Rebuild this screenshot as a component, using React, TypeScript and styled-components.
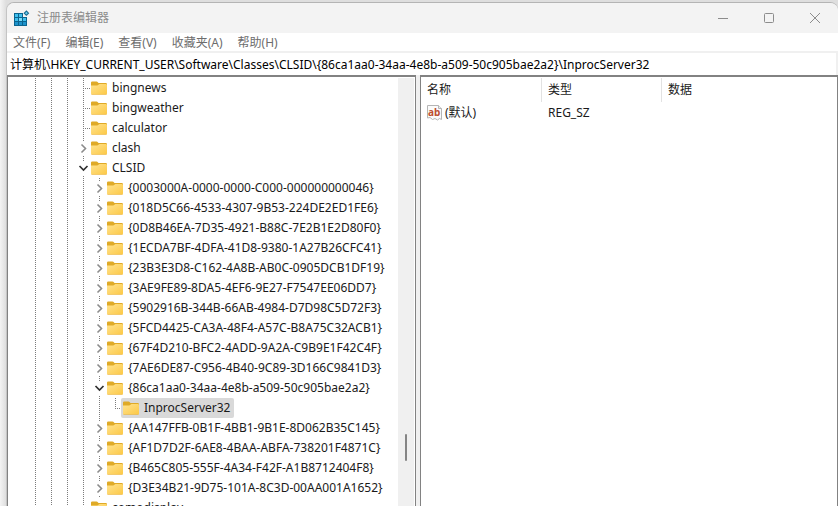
import React from 'react';
import styled, { createGlobalStyle, css } from 'styled-components';

const GlobalStyle = createGlobalStyle`
  *, *::before, *::after { box-sizing: border-box; }
  html, body, #root { height: 100%; }
  body {
    margin: 0;
    overflow: hidden;
    background: #ececec;
    color: #1a1a1a;
    font: 12px/20px "Noto Sans", "Noto Sans CJK SC", sans-serif;
  }
  button, input { font: inherit; color: inherit; }
`;

const Desktop = styled.div`
  height: 100%;
  padding: 2px 0 0 6px;
  background: linear-gradient(to right, #f4f4f4, #dedede 6px);
`;

const Window = styled.div`
  display: flex;
  flex-direction: column;
  height: 100%;
  border-top: 1px solid #b4b4b4;
  border-left: 1px solid #c4c4c4;
  border-radius: 8px 8px 0 0;
  background: #f0f0f0;
  overflow: hidden;
`;

const TitleBar = styled.header`
  display: flex;
  flex: none;
  align-items: center;
  height: 30px;
  padding-left: 6px;
  background: #f3f3f3;
  color: #8c8c8c;
`;

const Title = styled.h1`
  flex: 1;
  margin: 0 0 0 7px;
  font-size: 12px;
  font-weight: 400;
`;

const CaptionButton = styled.button`
  display: grid;
  place-items: center;
  width: 46px;
  height: 28px;
  padding: 0;
  border: 0;
  background: transparent;
`;

const MenuBar = styled.nav`
  display: flex;
  flex: none;
  height: 18px;
  padding-left: 6px;
  gap: 15px;
  background: #fff;
  color: #6d6d6d;
`;

const MenuButton = styled.button`
  padding: 0;
  border: 0;
  background: transparent;
  line-height: 20px;
`;

const AddressField = styled.input`
  flex: none;
  width: calc(100% - 2px);
  height: 22px;
  margin-top: 2px;
  padding: 0 3px;
  border: 0;
  outline: 0;
  background: #fff;
  color: #000;
`;

const Panes = styled.main`
  display: grid;
  flex: 1;
  grid-template-columns: 409px minmax(0, 1fr);
  gap: 4px;
  min-height: 0;
`;

const paneFrame = css`
  border: 1px solid #828282;
  border-top-width: 2px;
  border-bottom: 0;
  background: #fff;
  overflow: hidden;
`;

const TreePane = styled.section`
  ${paneFrame}
  display: flex;
  padding: 1px 1px 0 0;
`;

const Tree = styled.ul`
  flex: 1;
  min-width: 0;
  margin: 0;
  padding: 0 0 0 19px;
  list-style: none;
`;

const TreeRow = styled.li`
  display: flex;
  height: 20px;
  white-space: nowrap;
`;

const dots = css`
  background-image: repeating-linear-gradient(to bottom, #7c7c7c 0 1px, transparent 1px 2px);
  background-repeat: no-repeat;
  background-position: 8px 0;
`;

const Guide = styled.span`
  flex: none;
  width: 16px;
  ${dots}
  background-size: 1px 100%;
`;

const Branch = styled.span<{ $last?: boolean }>`
  flex: none;
  width: 16px;
  background-image:
    repeating-linear-gradient(to bottom, #7c7c7c 0 1px, transparent 1px 2px),
    repeating-linear-gradient(to right, #7c7c7c 0 1px, transparent 1px 2px);
  background-repeat: no-repeat;
  background-position: 8px 0, 8px 10px;
  background-size: 1px ${p => (p.$last ? '10px' : '100%')}, 8px 1px;
`;

const Expander = styled.button`
  display: grid;
  flex: none;
  place-items: center;
  width: 16px;
  padding: 0;
  border: 0;
  background-color: transparent;
  ${dots}
  background-size: 1px 100%;

  svg { background: #fff; }
`;

const KeyButton = styled.button<{ $selected?: boolean }>`
  display: flex;
  align-items: center;
  gap: 5px;
  height: 20px;
  margin-left: -2px;
  padding: 0 4px 0 2px;
  border: 0;
  border-radius: 2px;
  background: ${p => (p.$selected ? '#d9d9d9' : 'transparent')};
  line-height: 20px;
`;

const ScrollTrack = styled.div`
  display: flex;
  flex: none;
  flex-direction: column;
  align-items: center;
  width: 16px;
  background: #f0f0f0;
`;

const ScrollOffset = styled.div`
  flex: 356 0 0;
`;

const ScrollThumb = styled.div`
  flex: 27 0 0;
  width: 2px;
  border-radius: 1px;
  background: #858585;
`;

const ScrollRest = styled.div`
  flex: 45 0 0;
`;

const ValuePane = styled.section`
  ${paneFrame}
  padding-top: 1px;
`;

const ValueTable = styled.table`
  width: 100%;
  border-collapse: separate;
  border-spacing: 0;
  table-layout: fixed;
`;

const HeadCell = styled.th`
  height: 24px;
  padding: 0 0 0 6px;
  border-right: 1px solid #e2e2e2;
  font-weight: 400;
  text-align: left;

  &:last-child { border-right: 0; }
`;

const Cell = styled.td`
  height: 22px;
  padding: 0 0 0 6px;
`;

const ValueName = styled.span`
  display: flex;
  align-items: center;
  gap: 2px;
  margin-left: -1px;
`;

const AppIcon = () => (
  <svg width="17" height="16" viewBox="0 0 17 16" aria-hidden="true">
    <path d="M1 3h9v4h4v9H1z" fill="#0b648f" />
    <path d="M2 4h3v3H2zM6 4h3v3H6zM2 8h3v3H2zM10 8h3v3h-3z" fill="#3fc0ee" />
    <path d="M6 8h3v3H6z" fill="#7cdcf8" />
    <path d="M2 12h3v3H2zM6 12h3v3H6zM10 12h3v3h-3z" fill="#1c92cb" />
    <path d="m13.4.3 2.9 2.9-2.9 2.9-2.9-2.9z" fill="#17688f" />
    <path d="m13.4 1.8 1.4 1.4-1.4 1.4L12 3.2z" fill="#69cff0" />
  </svg>
);

const FolderIcon = () => (
  <svg width="16" height="14" viewBox="0 0 16 14" aria-hidden="true">
    <defs>
      <linearGradient id="folder-front" x1="0" y1="0" x2="1" y2="1">
        <stop offset="0" stopColor="#ffe38f" />
        <stop offset="1" stopColor="#fcc845" />
      </linearGradient>
    </defs>
    <path d="M0 1.6Q0 .4 1.2.4h4.2q.5 0 .9.4l1.2 1.2h7.3Q16 2 16 3.2V8H0z" fill="#dfaa27" />
    <path d="M0 4.4h6.2q.5 0 .9-.4l.6-.6q.3-.3.8-.3h6.3q1.2 0 1.2 1.2v8.1q0 1.2-1.2 1.2H1.2Q0 13.6 0 12.4z" fill="url(#folder-front)" />
    <path d="M.3 13q.3.6.9.6h13.6q.6 0 .9-.6z" fill="#e7ad32" />
  </svg>
);

const Chevron = ({ open }: { open?: boolean }) => (
  <svg width="12" height="14" viewBox="0 0 12 14" aria-hidden="true">
    {open ? (
      <path d="m2.5 5 4 4 4-4" fill="none" stroke="#303030" strokeWidth="1.7" />
    ) : (
      <path d="m4.5 3.5 4 4-4 4" fill="none" stroke="#8b8b8b" strokeWidth="1.6" />
    )}
  </svg>
);

const StringIcon = () => (
  <svg width="17" height="16" viewBox="0 0 17 16" overflow="visible" aria-hidden="true">
    <path d="M1.5.5h11l3 3v11l-2-1-2 1.5-2.5-1.5L6.5 14.5 4 12.5l-2.5.5z" fill="#fbfbfb" stroke="#b5b5b5" />
    <path d="M12.5.5v3h3" fill="#ececec" stroke="#b5b5b5" />
    <text x="2" y="11" fill="#bd4f31" fontFamily="Noto Sans" fontSize="10" fontWeight="700">ab</text>
  </svg>
);

type Kind = 'leaf' | 'last' | 'closed' | 'open';
type Key = { name: string; depth: number; kind: Kind; selected?: boolean };

const keys: Key[] = [
  { name: 'bingnews', depth: 0, kind: 'leaf' },
  { name: 'bingweather', depth: 0, kind: 'leaf' },
  { name: 'calculator', depth: 0, kind: 'leaf' },
  { name: 'clash', depth: 0, kind: 'closed' },
  { name: 'CLSID', depth: 0, kind: 'open' },
  { name: '{0003000A-0000-0000-C000-000000000046}', depth: 1, kind: 'closed' },
  { name: '{018D5C66-4533-4307-9B53-224DE2ED1FE6}', depth: 1, kind: 'closed' },
  { name: '{0D8B46EA-7D35-4921-B88C-7E2B1E2D80F0}', depth: 1, kind: 'closed' },
  { name: '{1ECDA7BF-4DFA-41D8-9380-1A27B26CFC41}', depth: 1, kind: 'closed' },
  { name: '{23B3E3D8-C162-4A8B-AB0C-0905DCB1DF19}', depth: 1, kind: 'closed' },
  { name: '{3AE9FE89-8DA5-4EF6-9E27-F7547EE06DD7}', depth: 1, kind: 'closed' },
  { name: '{5902916B-344B-66AB-4984-D7D98C5D72F3}', depth: 1, kind: 'closed' },
  { name: '{5FCD4425-CA3A-48F4-A57C-B8A75C32ACB1}', depth: 1, kind: 'closed' },
  { name: '{67F4D210-BFC2-4ADD-9A2A-C9B9E1F42C4F}', depth: 1, kind: 'closed' },
  { name: '{7AE6DE87-C956-4B40-9C89-3D166C9841D3}', depth: 1, kind: 'closed' },
  { name: '{86ca1aa0-34aa-4e8b-a509-50c905bae2a2}', depth: 1, kind: 'open' },
  { name: 'InprocServer32', depth: 2, kind: 'last', selected: true },
  { name: '{AA147FFB-0B1F-4BB1-9B1E-8D062B35C145}', depth: 1, kind: 'closed' },
  { name: '{AF1D7D2F-6AE8-4BAA-ABFA-738201F4871C}', depth: 1, kind: 'closed' },
  { name: '{B465C805-555F-4A34-F42F-A1B8712404F8}', depth: 1, kind: 'closed' },
  { name: '{D3E34B21-9D75-101A-8C3D-00AA001A1652}', depth: 1, kind: 'closed' },
  { name: 'comodisplay', depth: 0, kind: 'leaf' },
];

const RegistryKey = ({ name, depth, kind, selected }: Key) => (
  <TreeRow>
    {Array.from({ length: 3 + depth }, (_, i) => <Guide key={i} />)}
    {kind === 'leaf' || kind === 'last' ? (
      <Branch $last={kind === 'last'} />
    ) : (
      <Expander aria-label={`${kind === 'open' ? '折叠' : '展开'} ${name}`} aria-expanded={kind === 'open'}>
        <Chevron open={kind === 'open'} />
      </Expander>
    )}
    <KeyButton $selected={selected}>
      <FolderIcon />
      {name}
    </KeyButton>
  </TreeRow>
);

export default function App() {
  return (
    <>
      <GlobalStyle />
      <Desktop>
        <Window>
          <TitleBar>
            <AppIcon />
            <Title>注册表编辑器</Title>
            <CaptionButton aria-label="最小化">
              <svg width="10" height="10"><path d="M0 5.5h10" stroke="#8c8c8c" /></svg>
            </CaptionButton>
            <CaptionButton aria-label="最大化">
              <svg width="10" height="10"><rect x=".5" y=".5" width="9" height="9" rx="1" fill="none" stroke="#8c8c8c" /></svg>
            </CaptionButton>
            <CaptionButton aria-label="关闭">
              <svg width="10" height="10"><path d="m0 0 10 10M10 0 0 10" stroke="#8c8c8c" /></svg>
            </CaptionButton>
          </TitleBar>
          <MenuBar>
            {['文件(F)', '编辑(E)', '查看(V)', '收藏夹(A)', '帮助(H)'].map(label => (
              <MenuButton key={label}>{label}</MenuButton>
            ))}
          </MenuBar>
          <AddressField
            aria-label="地址"
            defaultValue={'计算机\\HKEY_CURRENT_USER\\Software\\Classes\\CLSID\\{86ca1aa0-34aa-4e8b-a509-50c905bae2a2}\\InprocServer32'}
          />
          <Panes>
            <TreePane>
              <Tree>
                {keys.map(key => <RegistryKey key={key.name} {...key} />)}
              </Tree>
              <ScrollTrack>
                <ScrollOffset />
                <ScrollThumb />
                <ScrollRest />
              </ScrollTrack>
            </TreePane>
            <ValuePane>
              <ValueTable>
                <colgroup>
                  <col width="121" />
                  <col width="120" />
                  <col />
                </colgroup>
                <thead>
                  <tr>
                    <HeadCell>名称</HeadCell>
                    <HeadCell>类型</HeadCell>
                    <HeadCell>数据</HeadCell>
                  </tr>
                </thead>
                <tbody>
                  <tr>
                    <Cell><ValueName><StringIcon />(默认)</ValueName></Cell>
                    <Cell>REG_SZ</Cell>
                    <Cell />
                  </tr>
                </tbody>
              </ValueTable>
            </ValuePane>
          </Panes>
        </Window>
      </Desktop>
    </>
  );
}
